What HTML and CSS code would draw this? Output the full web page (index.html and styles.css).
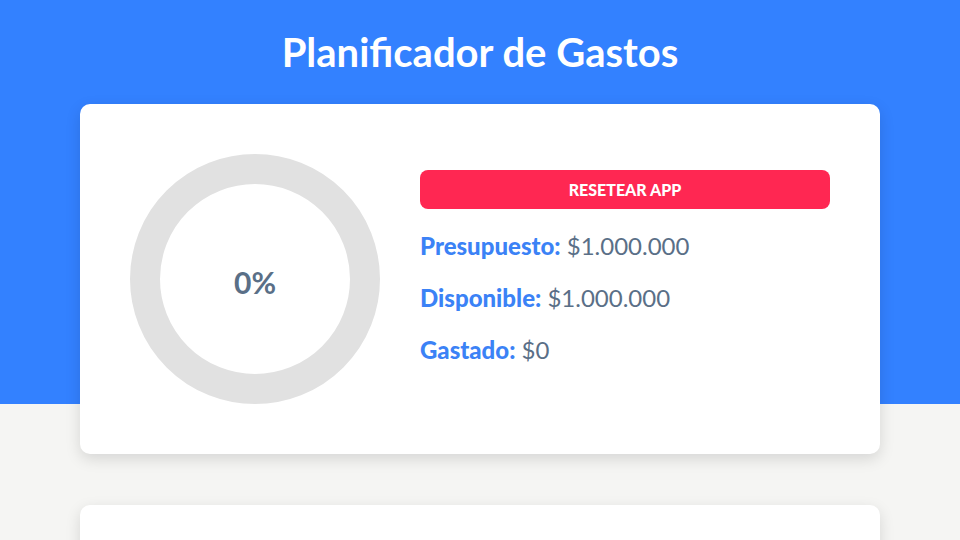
FILE: index.html
```html
<!DOCTYPE html>
<html lang="es">
<head>
<meta charset="utf-8">
<title>Planificador de Gastos</title>
<link rel="stylesheet" href="styles.css">
</head>
<body>
<header class="header">
  <h1 class="title">Planificador de Gastos</h1>
  <div class="card budget">
    <div class="ring"><span class="ring-text">0%</span></div>
    <div class="budget-info">
      <button class="reset" type="button">Resetear App</button>
      <p class="line"><span class="label">Presupuesto:</span> $1.000.000</p>
      <p class="line"><span class="label">Disponible:</span> $1.000.000</p>
      <p class="line"><span class="label">Gastado:</span> $0</p>
    </div>
  </div>
</header>
<main class="main">
  <section class="card next"></section>
</main>
</body>
</html>
```
FILE: styles.css
```css
* { box-sizing: border-box; }
html, body { margin: 0; padding: 0; }
body {
  font-family: "Lato", "Liberation Sans", sans-serif;
  background: #f5f5f3;
  color: #5a6f87;
  overflow: hidden;
}
.header {
  display: flow-root;
  background: #3381ff;
  padding-top: 29px;
}
.title {
  margin: 0 0 29px;
  text-align: center;
  color: #fff;
  font-size: 40px;
  font-weight: 700;
  line-height: 46px;
}
.card {
  width: 800px;
  margin: 0 auto;
  background: #fff;
  border-radius: 10px;
  box-shadow: 0 5px 15px rgba(0, 0, 0, 0.13);
}
.budget {
  padding: 50px;
  display: grid;
  grid-template-columns: 250px 1fr;
  column-gap: 40px;
  margin-bottom: -50px;
  position: relative;
}
.ring {
  width: 250px;
  height: 250px;
  border-radius: 50%;
  border: 30px solid #e1e1e1;
  display: flex;
  align-items: center;
  justify-content: center;
}
.ring-text {
  font-size: 30px;
  font-weight: 700;
  color: #5a6f87;
  margin-top: 6px;
}
.budget-info {
  display: flex;
  flex-direction: column;
  gap: 22px;
  padding-top: 16px;
}
.reset {
  height: 39px;
  border: none;
  border-radius: 8px;
  background: #ff2752;
  color: #fff;
  font-family: inherit;
  font-size: 16px;
  font-weight: 900;
  text-transform: uppercase;
  cursor: pointer;
}
.line {
  margin: 0;
  font-size: 24px;
  line-height: 30px;
  color: #5a6f87;
}
.label {
  color: #3b82f6;
  font-weight: 900;
}
.main {
  padding-top: 101px;
}
.next {
  height: 200px;
}
```
